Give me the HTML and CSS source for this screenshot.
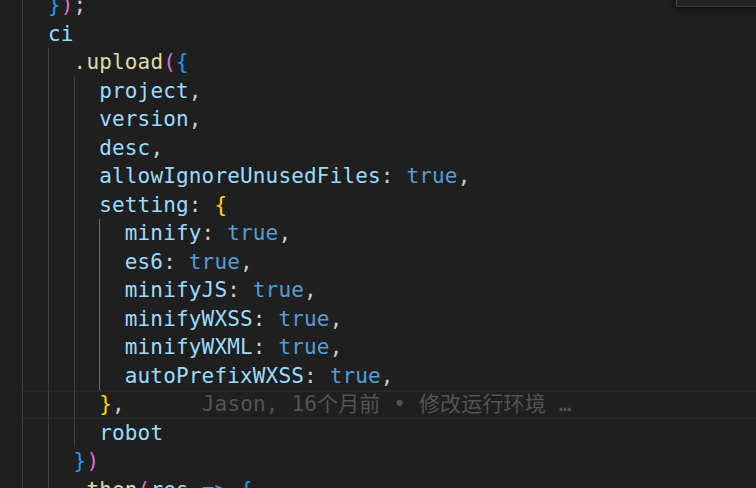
FILE: index.html
```html
<!DOCTYPE html>
<html lang="zh">
<head>
<meta charset="utf-8">
<title>editor</title>
<link rel="stylesheet" href="styles.css">
</head>
<body>
<div class="editor">
<div class="code">
<div class="ln"><span class="g"> </span><span class="b3">}</span><span class="b2">)</span><span class="p">;</span></div>
<div class="ln"><span class="g"> </span><span class="v">ci</span></div>
<div class="ln"><span class="g"> </span><span class="g"> </span><span class="p">.</span><span class="f">upload</span><span class="b2">(</span><span class="b3">{</span></div>
<div class="ln"><span class="g"> </span><span class="g"> </span><span class="g"> </span><span class="v">project</span><span class="p">,</span></div>
<div class="ln"><span class="g"> </span><span class="g"> </span><span class="g"> </span><span class="v">version</span><span class="p">,</span></div>
<div class="ln"><span class="g"> </span><span class="g"> </span><span class="g"> </span><span class="v">desc</span><span class="p">,</span></div>
<div class="ln"><span class="g"> </span><span class="g"> </span><span class="g"> </span><span class="v">allowIgnoreUnusedFiles</span><span class="p">: </span><span class="k">true</span><span class="p">,</span></div>
<div class="ln"><span class="g"> </span><span class="g"> </span><span class="g"> </span><span class="v">setting</span><span class="p">: </span><span class="b1">{</span></div>
<div class="ln"><span class="g"> </span><span class="g"> </span><span class="g"> </span><span class="g ga"> </span><span class="v">minify</span><span class="p">: </span><span class="k">true</span><span class="p">,</span></div>
<div class="ln"><span class="g"> </span><span class="g"> </span><span class="g"> </span><span class="g ga"> </span><span class="v">es6</span><span class="p">: </span><span class="k">true</span><span class="p">,</span></div>
<div class="ln"><span class="g"> </span><span class="g"> </span><span class="g"> </span><span class="g ga"> </span><span class="v">minifyJS</span><span class="p">: </span><span class="k">true</span><span class="p">,</span></div>
<div class="ln"><span class="g"> </span><span class="g"> </span><span class="g"> </span><span class="g ga"> </span><span class="v">minifyWXSS</span><span class="p">: </span><span class="k">true</span><span class="p">,</span></div>
<div class="ln"><span class="g"> </span><span class="g"> </span><span class="g"> </span><span class="g ga"> </span><span class="v">minifyWXML</span><span class="p">: </span><span class="k">true</span><span class="p">,</span></div>
<div class="ln"><span class="g"> </span><span class="g"> </span><span class="g"> </span><span class="g ga"> </span><span class="v">autoPrefixWXSS</span><span class="p">: </span><span class="k">true</span><span class="p">,</span></div>
<div class="ln cur"><span class="g"> </span><span class="g"> </span><span class="g"> </span><span class="b1">}</span><span class="p">,</span><span class="blame">Jason, 16个月前 • 修改运行环境 …</span></div>
<div class="ln"><span class="g"> </span><span class="g"> </span><span class="g"> </span><span class="v">robot</span></div>
<div class="ln"><span class="g"> </span><span class="g"> </span><span class="b3">}</span><span class="b2">)</span></div>
<div class="ln"><span class="g"> </span><span class="g"> </span><span class="p">.</span><span class="f">then</span><span class="b2">(</span><span class="v">res</span><span class="p"> </span><span class="k">=&gt;</span><span class="p"> </span><span class="b3">{</span></div>
</div>
<div class="widget"></div>
</div>
</body>
</html>
```
FILE: styles.css
```css
html, body {
  margin: 0;
  padding: 0;
  background: #1f1f1f;
  overflow: hidden;
}
.editor {
  position: relative;
  width: 756px;
  height: 488px;
  overflow: hidden;
  background: #1f1f1f;
}
.code {
  margin-top: -9px;
  padding-left: 22.4px;
  font-family: "DejaVu Sans Mono", "Noto Sans CJK SC", monospace;
  font-size: 21px;
  letter-spacing: 0.16px;
  color: #cccccc;
}
.ln {
  display: flex;
  height: 28.5px;
  line-height: 28.5px;
  white-space: pre;
  box-sizing: border-box;
}
.cur {
  border-top: 2px solid #282828;
  border-bottom: 2px solid #282828;
  line-height: 24.5px;
}
.g {
  width: 25.6px;
  flex: none;
  box-shadow: inset 1px 0 0 #404040;
}
.cur .g {
  margin: -2px 0;
}
.ga {
  box-shadow: inset 1px 0 0 #707070;
}
.v { color: #9cdcfe; }
.f { color: #dcdcaa; }
.k { color: #569cd6; }
.p { color: #cccccc; }
.b1 { color: #ffd700; }
.b2 { color: #da70d6; }
.b3 { color: #179fff; }
.blame {
  margin-left: 77px;
  color: #545454;
}
.widget {
  position: absolute;
  top: -10px;
  left: 676px;
  width: 100px;
  height: 16px;
  background: #232323;
  border-left: 1px solid #4a4a4a;
  border-bottom: 1px solid #383838;
  box-shadow: 0 1px 6px 1px rgba(0, 0, 0, 0.45);
}
```
